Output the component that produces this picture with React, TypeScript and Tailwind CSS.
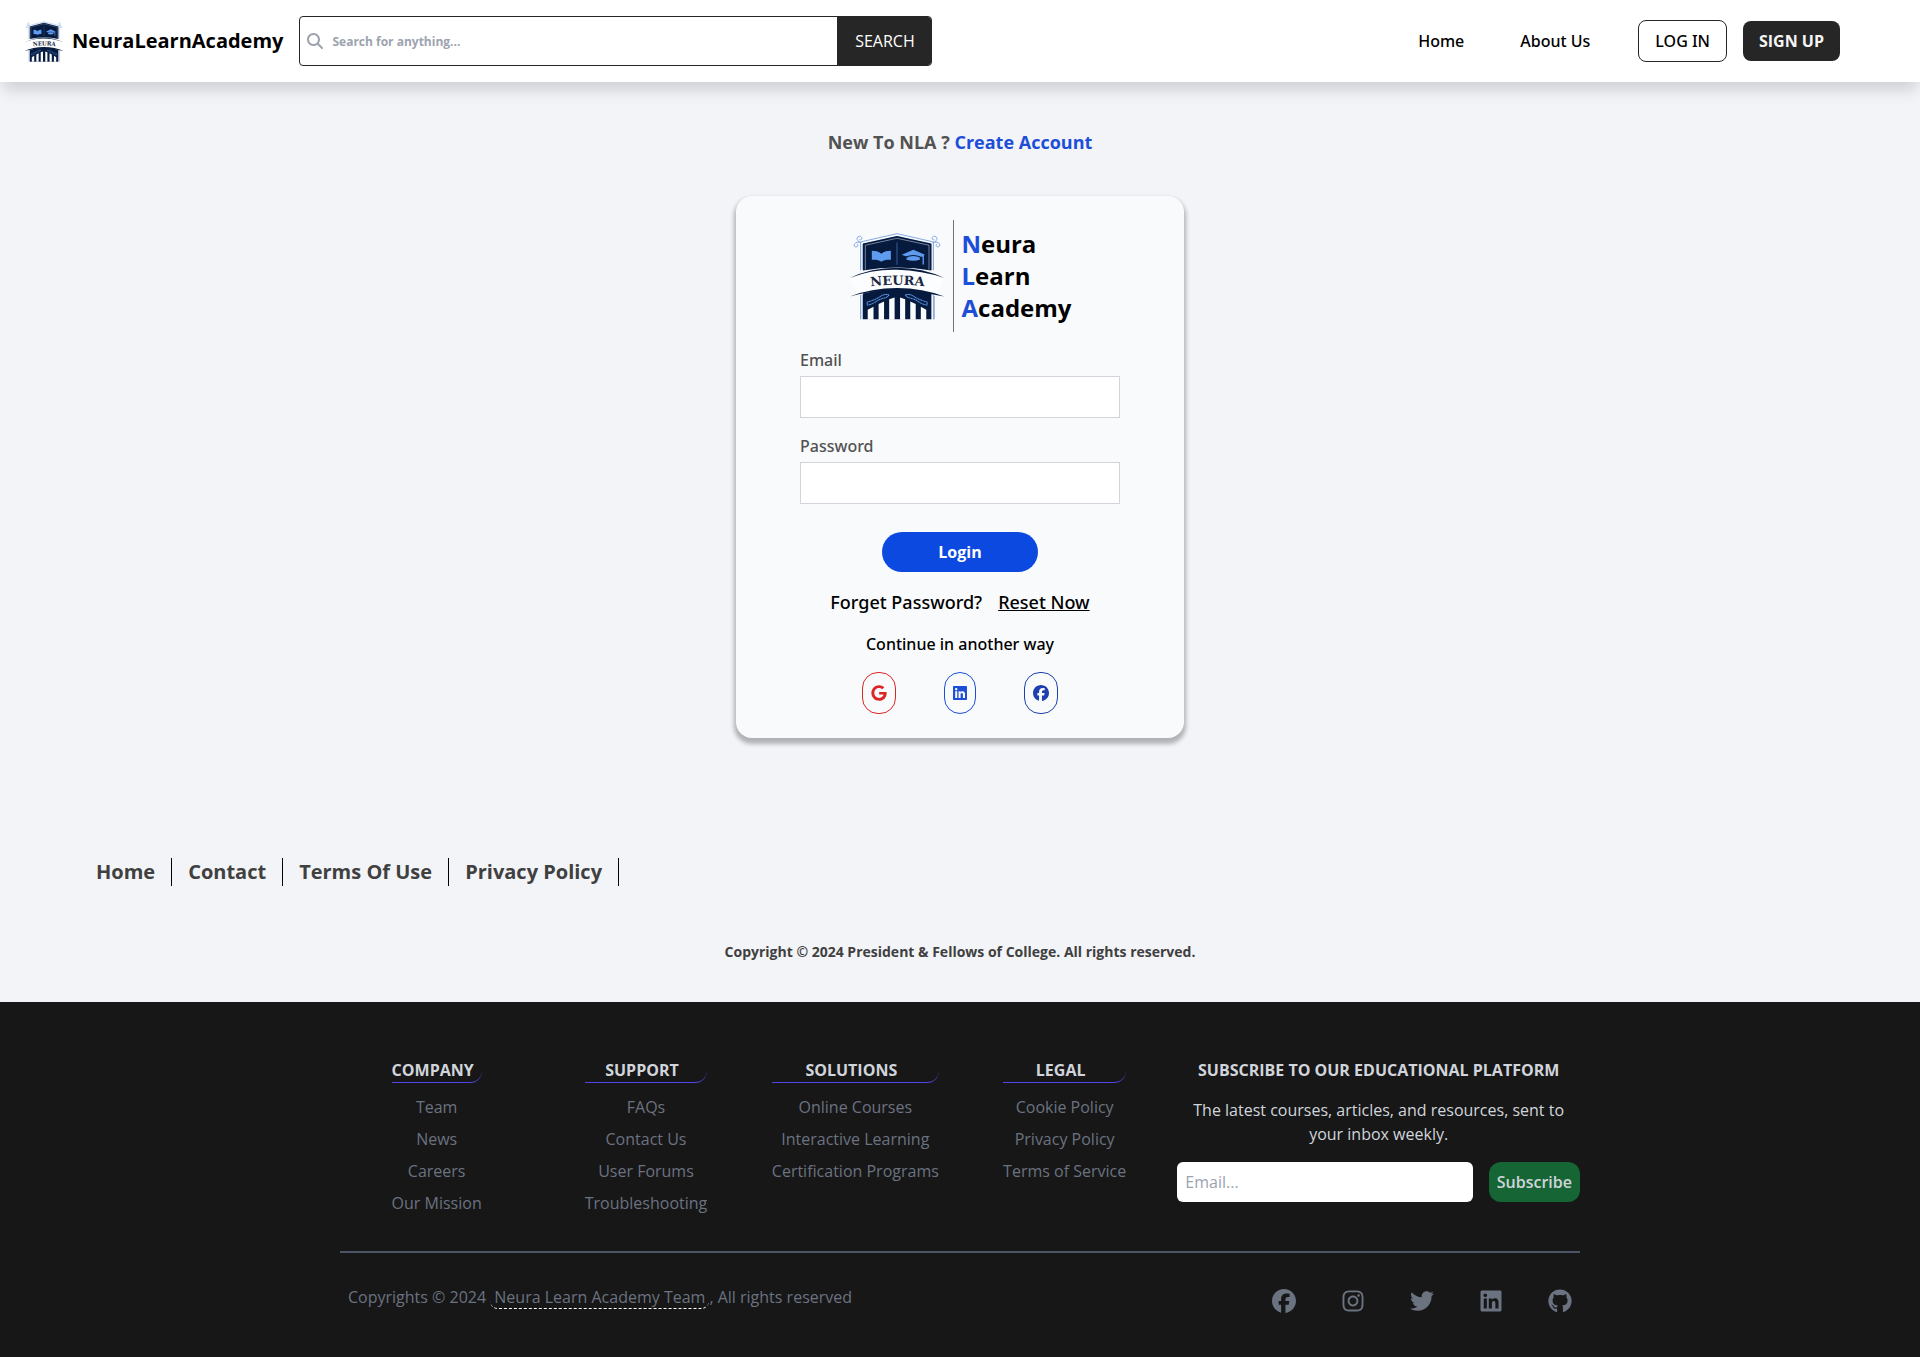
import React from "react";
import {
  FaFacebook,
  FaGithub,
  FaGoogle,
  FaInstagram,
  FaLinkedin,
  FaMagnifyingGlass,
  FaTwitter,
} from "react-icons/fa6";

function Crest({ className, arcId }: { className: string; arcId: string }) {
  const navy = "#061a3e";
  const sky = "#5f9cf0";
  return (
    <svg
      viewBox="390 366 282 266"
      preserveAspectRatio="none"
      className={className}
      role="img"
      aria-label="Neura crest"
    >
      <g fill="none" stroke="#6d9be0" strokeWidth="2.5">
        <path d="M424 396 531 371 638 396" />
        <path d="M428 404 531 379 634 404" stroke="#a9c6f2" />
        <path d="M426 398c-8-2-14-8-12-14s10-7 13-2-2 9-6 7" />
        <path d="M426 398c-8-3-17-1-20 4s1 10 6 9 6-8 1-8" />
        <path d="M636 398c8-2 14-8 12-14s-10-7-13-2 2 9 6 7" />
        <path d="M636 398c8-3 17-1 20 4s-1 10-6 9-6-8-1-8" />
        <path d="M424 398V482M638 398V482M424 556V630M638 556V630" />
        <path d="M429 404V480M633 404V480M429 556V630M641 560V630" stroke="#9aa9c4" />
      </g>
      <path d="M431 401 531 378 632 401V482Q531 464 431 482Z" fill={navy} />
      <path d="M438 480V406L531 385 625 406V480" fill="none" stroke="#dfe8f7" strokeWidth="1.5" />
      <path d="M531 398V465" stroke="#3f6cae" strokeWidth="2.5" />
      <path d="M457 423c10 0 20 2 28 9 8-7 18-9 28-9v27c-10-1-20 0-28 6-8-6-18-7-28-6Z" fill={sky} />
      <path d="M545 435 579 420 613 435 610 437V464H606V440L579 448Z" fill={sky} />
      <path d="M559 444Q579 436 598 444V450Q579 456 559 450Z" fill={sky} />
      <path d="M556 442Q579 432 601 442" fill="none" stroke={navy} strokeWidth="3" />
      <path d="M431 552Q531 526 632 552V630H431Z" fill={navy} />
      <path
        d="M445 631V601L462 592V631ZM477 631V584L493 576V631ZM508 631V569L524 564V631ZM540 631V564L555 569V631ZM570 631V576L586 584V631ZM601 631V592L617 601V631Z"
        fill="#f9fbfd"
      />
      <g fill="none" stroke={sky} strokeWidth="3">
        <path d="M443 578Q470 570 482 561T508 556L500 564Q480 568 470 576T444 587Z" strokeDasharray="4 1" />
        <path d="M620 578Q593 570 581 561T555 556L563 564Q583 568 593 576T619 587Z" strokeDasharray="4 1" />
      </g>
      <path d="M392 504Q455 476 531 476T670 504L648 552Q600 538 531 538T414 552Z" fill="#fcfdfe" />
      <path d="M392 505Q455 474 531 474T670 505Q605 482 531 480T392 505Z" fill={navy} />
      <path d="M392 561Q455 535 531 535T670 561Q605 546 531 544T392 561Z" fill={navy} />
      <path id={arcId} d="M450 531Q531 520 615 530" fill="none" />
      <text
        fill="#1b2942"
        fontFamily="'DejaVu Serif', serif"
        fontWeight="700"
        fontSize="38"
        textAnchor="middle"
      >
        <textPath href={"#" + arcId} startOffset="50%">
          NEURA
        </textPath>
      </text>
    </svg>
  );
}

const columns = [
  { title: "COMPANY", links: ["Team", "News", "Careers", "Our Mission"] },
  { title: "SUPPORT", links: ["FAQs", "Contact Us", "User Forums", "Troubleshooting"] },
  { title: "SOLUTIONS", links: ["Online Courses", "Interactive Learning", "Certification Programs"] },
  { title: "LEGAL", links: ["Cookie Policy", "Privacy Policy", "Terms of Service"] },
];

const networks = [
  { label: "Facebook", Icon: FaFacebook },
  { label: "Instagram", Icon: FaInstagram },
  { label: "Twitter", Icon: FaTwitter },
  { label: "LinkedIn", Icon: FaLinkedin },
  { label: "GitHub", Icon: FaGithub },
];

function Header() {
  return (
    <header className="flex items-center bg-white py-4 pr-20 pl-6 shadow-[0_10px_15px_-3px_rgba(0,0,0,0.16)]">
      <a href="#" className="flex items-center gap-2">
        <Crest className="h-[41px] w-10" arcId="crest-arc-small" />
        <span className="text-xl font-bold text-black">NeuraLearnAcademy</span>
      </a>
      <form className="ml-4 flex h-[50px] w-[633px] overflow-hidden rounded border border-[#262626]">
        <label className="flex flex-1 items-center gap-[9px] pl-[7px]">
          <FaMagnifyingGlass className="h-4 w-4 text-[#9ca3af]" />
          <input
            type="search"
            aria-label="Search"
            placeholder="Search for anything..."
            className="h-full flex-1 bg-white text-xs font-bold text-gray-700 outline-none placeholder:text-[#9ca3af]"
          />
        </label>
        <button type="button" className="-my-px -mr-px w-[95px] bg-[#262626] text-white">
          SEARCH
        </button>
      </form>
      <nav className="ml-auto flex items-center font-['Noto_Sans',sans-serif] font-medium text-black">
        <a href="#">Home</a>
        <a href="#" className="ml-14">About Us</a>
        <button type="button" className="ml-12 rounded-lg border border-[#262626] px-4 py-2 font-medium">
          LOG IN
        </button>
        <button type="button" className="ml-4 rounded-lg bg-[#262626] px-4 py-2 font-['Open_Sans',sans-serif] font-bold text-[#f5f5f5]">
          SIGN UP
        </button>
      </nav>
    </header>
  );
}

function LoginCard() {
  return (
    <form className="flex w-[448px] flex-col items-center rounded-2xl bg-[#f9fafc] py-6 shadow-[0_4px_4px_2px_rgba(0,0,0,0.27)]">
      <div className="flex h-28 items-center">
        <Crest className="h-[88px] w-24" arcId="crest-arc-large" />
        <div className="ml-2 flex h-full flex-col justify-center border-l border-[#737373] pl-2 text-2xl font-bold text-black">
          <span><span className="text-[#1d4ed8]">N</span>eura</span>
          <span><span className="text-[#1d4ed8]">L</span>earn</span>
          <span><span className="text-[#1d4ed8]">A</span>cademy</span>
        </div>
      </div>
      <div className="mt-4 flex w-80 flex-col gap-4 font-['Noto_Sans',sans-serif] font-medium text-[#525252]">
        <label className="flex flex-col gap-1">
          Email
          <input type="email" className="h-[42px] border border-[#d1d5db] bg-white px-2 outline-none" />
        </label>
        <label className="flex flex-col gap-1">
          Password
          <input type="password" className="h-[42px] border border-[#d1d5db] bg-white px-2 outline-none" />
        </label>
      </div>
      <button type="button" className="mt-7 h-10 w-[156px] rounded-[20px] bg-[#0b49e0] font-bold text-white">
        Login
      </button>
      <p className="mt-4 flex gap-4 font-['Noto_Sans',sans-serif] text-lg font-medium text-black">
        <span>Forget Password?</span>
        <a href="#" className="underline">Reset Now</a>
      </p>
      <p className="mt-4 font-['Noto_Sans',sans-serif] font-medium text-black">Continue in another way</p>
      <div className="mt-4 flex gap-12">
        <button type="button" aria-label="Google" className="flex h-[42px] items-center rounded-2xl border border-[#dc2626] px-2 text-[#dc2626]">
          <FaGoogle className="h-4 w-4" />
        </button>
        <button type="button" aria-label="LinkedIn" className="flex h-[42px] items-center rounded-2xl border border-[#1d4ed8] px-2 text-[#1d4ed8]">
          <FaLinkedin className="h-4 w-3.5" />
        </button>
        <button type="button" aria-label="Facebook" className="flex h-[42px] items-center rounded-2xl border border-[#1e40af] px-2 text-[#1e40af]">
          <FaFacebook className="h-4 w-4" />
        </button>
      </div>
    </form>
  );
}

function Footer() {
  return (
    <footer className="bg-[#171717] pt-14 pb-12 text-[#6b7280]">
      <div className="mx-auto max-w-[1240px]">
        <div className="grid grid-cols-6 gap-4 text-center">
          {columns.map((column) => (
            <div key={column.title} className="justify-self-center">
              <h2 className="rounded-br-xl border-b border-[#4f46e5] pr-2 font-bold text-[#d1d5db]">
                {column.title}
              </h2>
              <ul className="mt-3 flex flex-col gap-2">
                {column.links.map((link) => (
                  <li key={link}>
                    <a href="#">{link}</a>
                  </li>
                ))}
              </ul>
            </div>
          ))}
          <div className="col-span-2 text-[#d1d5db]">
            <h2 className="font-bold">SUBSCRIBE TO OUR EDUCATIONAL PLATFORM</h2>
            <p className="mt-4 px-2">
              The latest courses, articles, and resources, sent to your inbox weekly.
            </p>
            <form className="mt-4 flex gap-4">
              <input
                type="email"
                aria-label="Email"
                placeholder="Email..."
                className="h-10 min-w-0 flex-1 rounded-md bg-white px-2 text-gray-700 outline-none placeholder:text-[#9ca3af]"
              />
              <button type="button" className="h-10 rounded-xl bg-[#166534] px-2 font-semibold">
                Subscribe
              </button>
            </form>
          </div>
        </div>
        <hr className="mt-9 border-t-2 border-[#4b5563]" />
        <div className="mt-8 flex items-start justify-between px-2">
          <p>
            Copyrights © 2024{" "}
            <a href="#" className="rounded-lg border-b border-dashed border-white px-1">
              Neura Learn Academy Team
            </a>
            , All rights reserved
          </p>
          <div className="mt-1 flex gap-[45px]">
            {networks.map(({ label, Icon }) => (
              <a key={label} href="#" aria-label={label}>
                <Icon className="h-6 w-6" />
              </a>
            ))}
          </div>
        </div>
      </div>
    </footer>
  );
}

export default function App() {
  return (
    <div className="min-h-screen bg-[#f3f4f8] font-['Open_Sans',sans-serif] text-base">
      <Header />
      <main className="flex flex-col items-center pt-[46px]">
        <p className="text-lg font-bold text-[#525252]">
          New To NLA ? <a href="#" className="text-[#1d4ed8]">Create Account</a>
        </p>
        <div className="mt-10">
          <LoginCard />
        </div>
      </main>
      <section className="mt-[120px] pb-10">
        <nav className="flex px-20 text-xl font-bold text-[#404040]">
          {["Home", "Contact", "Terms Of Use", "Privacy Policy"].map((item) => (
            <a key={item} href="#" className="border-r border-black px-4">
              {item}
            </a>
          ))}
        </nav>
        <p className="mt-14 text-center text-sm font-bold text-[#404040]">
          Copyright © 2024 President &amp; Fellows of College. All rights reserved.
        </p>
      </section>
      <Footer />
    </div>
  );
}
